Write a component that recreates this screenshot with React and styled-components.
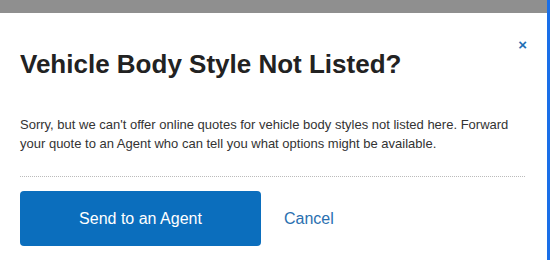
import React from 'react'
import styled, { createGlobalStyle } from 'styled-components'

const Global = createGlobalStyle`
    html, body {
        margin:0;
        padding:0;
        background:#fff;
        font-family:"Liberation Sans", Arial, sans-serif;
    }
`

const Page = styled.div`
    display:flex;
    width:550px;
    height:260px;
    overflow:hidden;
`

const Main = styled.div`
    flex:1;
    display:flex;
    flex-direction:column;
`

const Stripe = styled.div`
    width:3px;
    background:#1a6fe8;
`

const TopBar = styled.div`
    height:13px;
    background:#8f8f8f;
`

const Modal = styled.div`
    position:relative;
    padding:36px 20px 0 20px;
`

const Close = styled.button`
    position:absolute;
    top:24px;
    right:20px;
    border:none;
    background:transparent;
    color:#1f6fb5;
    font-family:"Liberation Sans", Arial, sans-serif;
    font-size:15px;
    font-weight:bold;
    padding:0;
    line-height:1;
    cursor:pointer;
`

const Title = styled.h1`
    margin:0;
    font-size:26px;
    font-weight:bold;
    color:#222;
    line-height:30px;
`

const Text = styled.p`
    margin:36px 0 0 0;
    font-size:13px;
    line-height:19px;
    color:#333;
    width:500px;
`

const Divider = styled.hr`
    margin:23px 0 0 0;
    width:505px;
    border:none;
    border-top:1px dotted #bbb;
`

const Actions = styled.div`
    display:flex;
    align-items:center;
    gap:23px;
    margin-top:14px;
`

const Primary = styled.button`
    width:241px;
    height:55px;
    border:none;
    border-radius:4px;
    background:#0b6ebd;
    color:#fff;
    font-family:"Liberation Sans", Arial, sans-serif;
    font-size:16px;
    cursor:pointer;
`

const Link = styled.a`
    color:#2a6fb0;
    font-size:16px;
    cursor:pointer;
`

function App() {
    return (
        <Page>
            <Global />
            <Main>
                <TopBar />
                <Modal>
                    <Close aria-label="Close">×</Close>
                    <Title>Vehicle Body Style Not Listed?</Title>
                    <Text>
                        Sorry, but we can't offer online quotes for vehicle body styles not listed here. Forward your quote to an Agent who can tell you what options might be available.
                    </Text>
                    <Divider />
                    <Actions>
                        <Primary>Send to an Agent</Primary>
                        <Link>Cancel</Link>
                    </Actions>
                </Modal>
            </Main>
            <Stripe />
        </Page>
    )
}

export default App
